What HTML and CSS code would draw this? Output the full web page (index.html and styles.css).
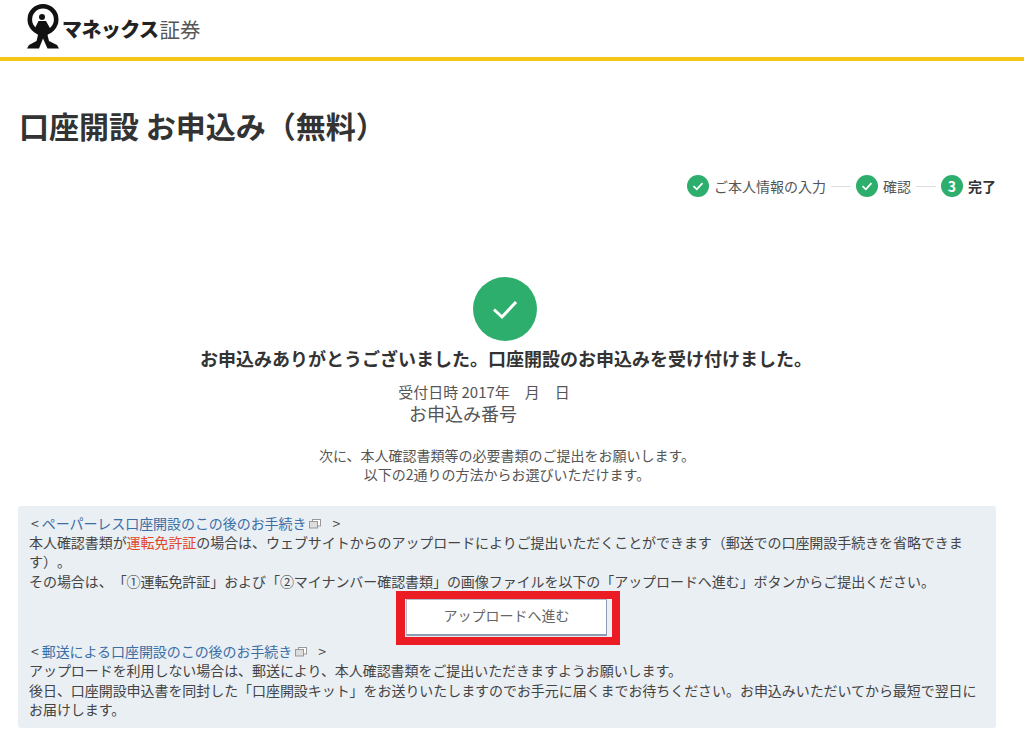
FILE: index.html
```html
<!DOCTYPE html>
<html lang="ja">
<head>
<meta charset="utf-8">
<title>口座開設 お申込み（無料）</title>
<link rel="stylesheet" href="styles.css">
</head>
<body>
<header class="site-header">
  <svg class="logo-mark" viewBox="0 0 36 48" aria-hidden="true">
    <circle cx="18" cy="17.5" r="13.2" fill="none" stroke="#111" stroke-width="4.6"/>
    <circle cx="17" cy="15" r="3" fill="#111"/>
    <path d="M9 28 L13.5 19 L21 19 L26 28 L22.5 33 L24 39 L32 43 L34 46.5 L22.5 46.5 L18 36.5 L14 46.5 L2 46.5 L4 43 L11.5 39 L13 33 Z" fill="#111"/>
  </svg>
  <span class="logo-name">マネックス</span><span class="logo-sub">証券</span>
</header>
<main class="page">
  <h1 class="page-title">口座開設 お申込み（無料）</h1>
  <ol class="steps">
    <li class="step">
      <span class="step-dot"><svg viewBox="0 0 22 22" class="step-check"><path d="M6.5 11.2 L9.8 14.3 L15.5 8.2"/></svg></span>ご本人情報の入力
    </li>
    <li class="step-line"></li>
    <li class="step">
      <span class="step-dot"><svg viewBox="0 0 22 22" class="step-check"><path d="M6.5 11.2 L9.8 14.3 L15.5 8.2"/></svg></span>確認
    </li>
    <li class="step-line"></li>
    <li class="step step-current">
      <span class="step-dot">3</span>完了
    </li>
  </ol>
  <section class="done">
    <span class="done-icon"><svg viewBox="0 0 64 64"><path d="M21 32.5 L29 40 L43 25"/></svg></span>
    <h2 class="done-title">お申込みありがとうございました。口座開設のお申込みを受け付けました。</h2>
    <p class="done-date">受付日時 2017年　月　日</p>
    <p class="done-number">お申込み番号</p>
    <p class="done-next">次に、本人確認書類等の必要書類のご提出をお願いします。<br>以下の2通りの方法からお選びいただけます。</p>
  </section>
  <section class="notice">
    <p class="notice-head">&lt;<a href="#">ペーパーレス口座開設のこの後のお手続き</a><svg class="ext" viewBox="0 0 12 10"><rect x="3.5" y="0.5" width="8" height="6.5" fill="#fff" stroke="#999"/><rect x="0.5" y="2.5" width="8" height="6.5" fill="#ddd" stroke="#999"/></svg> &gt;</p>
    <p>本人確認書類が<span class="alert">運転免許証</span>の場合は、ウェブサイトからのアップロードによりご提出いただくことができます（郵送での口座開設手続きを省略できます）。</p>
    <p>その場合は、「①運転免許証」および「②マイナンバー確認書類」の画像ファイルを以下の「アップロードへ進む」ボタンからご提出ください。</p>
    <div class="cta-row"><div class="cta-mark"><button class="cta" type="button">アップロードへ進む</button></div></div>
    <p class="notice-head">&lt;<a href="#">郵送による口座開設のこの後のお手続き</a><svg class="ext" viewBox="0 0 12 10"><rect x="3.5" y="0.5" width="8" height="6.5" fill="#fff" stroke="#999"/><rect x="0.5" y="2.5" width="8" height="6.5" fill="#ddd" stroke="#999"/></svg> &gt;</p>
    <p>アップロードを利用しない場合は、郵送により、本人確認書類をご提出いただきますようお願いします。</p>
    <p>後日、口座開設申込書を同封した「口座開設キット」をお送りいたしますのでお手元に届くまでお待ちください。お申込みいただいてから最短で翌日にお届けします。</p>
  </section>
</main>
</body>
</html>
```
FILE: styles.css
```css
* { box-sizing: border-box; }
html, body { margin: 0; padding: 0; }
body {
  background: #fff;
  color: #444;
  font-family: "Noto Sans CJK JP", "Noto Sans", sans-serif;
  font-size: 14px;
  overflow: hidden;
  text-spacing-trim: space-all;
}
p, h1, h2, ol { margin: 0; padding: 0; }
.site-header {
  height: 61px;
  border-bottom: 4px solid #f5c518;
  display: flex;
  align-items: flex-start;
  padding: 2px 0 0 25px;
}
.logo-mark { width: 36px; height: 48px; flex: none; }
.logo-name {
  margin: 12px 0 0 1px;
  font-size: 20px;
  line-height: 30px;
  font-weight: 900;
  color: #222;
  letter-spacing: -0.6px;
}
.logo-sub {
  margin: 12px 0 0 1px;
  font-size: 20.5px;
  line-height: 30px;
  color: #555;
}
.page { padding: 0 28px 0 18px; }
.page-title {
  margin: 44px 0 0 1px;
  font-size: 30px;
  line-height: 40px;
  font-weight: 700;
  color: #333;
}
.steps {
  list-style: none;
  margin-top: 29px;
  height: 24px;
  display: flex;
  justify-content: flex-end;
  align-items: center;
  gap: 5px;
}
.step { display: flex; align-items: center; gap: 5px; line-height: 22px; color: #555; }
.step-dot {
  width: 22px;
  height: 22px;
  border-radius: 50%;
  background: #2eae6d;
  color: #fff;
  font-size: 14px;
  font-weight: 700;
  line-height: 22px;
  text-align: center;
  flex: none;
}
.step-check { display: block; width: 22px; height: 22px; fill: none; stroke: #fff; stroke-width: 1.8; }
.step-line { width: 20px; height: 1px; background: #ddd; }
.step-current { color: #333; font-weight: 700; }
.done { display: flex; flex-direction: column; align-items: center; margin-top: 79px; }
.done-icon {
  width: 64px;
  height: 64px;
  border-radius: 50%;
  background: #2eae6d;
  margin-left: -4px;
}
.done-icon svg { display: block; width: 64px; height: 64px; fill: none; stroke: #fff; stroke-width: 3; }
.done-title {
  margin-top: 4px;
  font-size: 18px;
  line-height: 27px;
  font-weight: 700;
  color: #333;
  white-space: nowrap;
  padding-right: 2px;
}
.done-date { margin-top: 10px; font-size: 15px; line-height: 20px; padding-right: 46px; color: #555; }
.done-number { margin-top: 0; font-size: 18px; line-height: 22px; padding-right: 88px; color: #555; }
.done-next { margin-top: 22px; line-height: 19.4px; text-align: center; color: #555; }
.notice {
  margin-top: 21px;
  height: 222px;
  padding: 8px 11px;
  background: #eaeff4;
  border-radius: 3px;
  line-height: 19.33px;
  letter-spacing: -0.06px;
}
.notice-head { padding-left: 2px; }
.notice-head a { color: #3a6ea5; text-decoration: none; margin-left: 3px; }
.ext { width: 12px; height: 10px; margin: 0 8px 0 3px; }
.alert { color: #e0472b; }
.cta-row { display: flex; justify-content: center; margin: 0 0 -3px; padding-left: 2px; }
.cta-mark {
  border: solid #ec1c24;
  border-width: 8px 8px 8px 9px;
  padding: 0 5px 1px 1px;
}
.cta {
  display: block;
  width: 201px;
  height: 37px;
  padding: 0 0 4px;
  border: 1px solid #b4bfce;
  border-right-color: #8e9cb2;
  border-bottom: 2px solid #8e9cb2;
  background: #fff;
  color: #666;
  font-family: inherit;
  font-size: 14px;
}
```
